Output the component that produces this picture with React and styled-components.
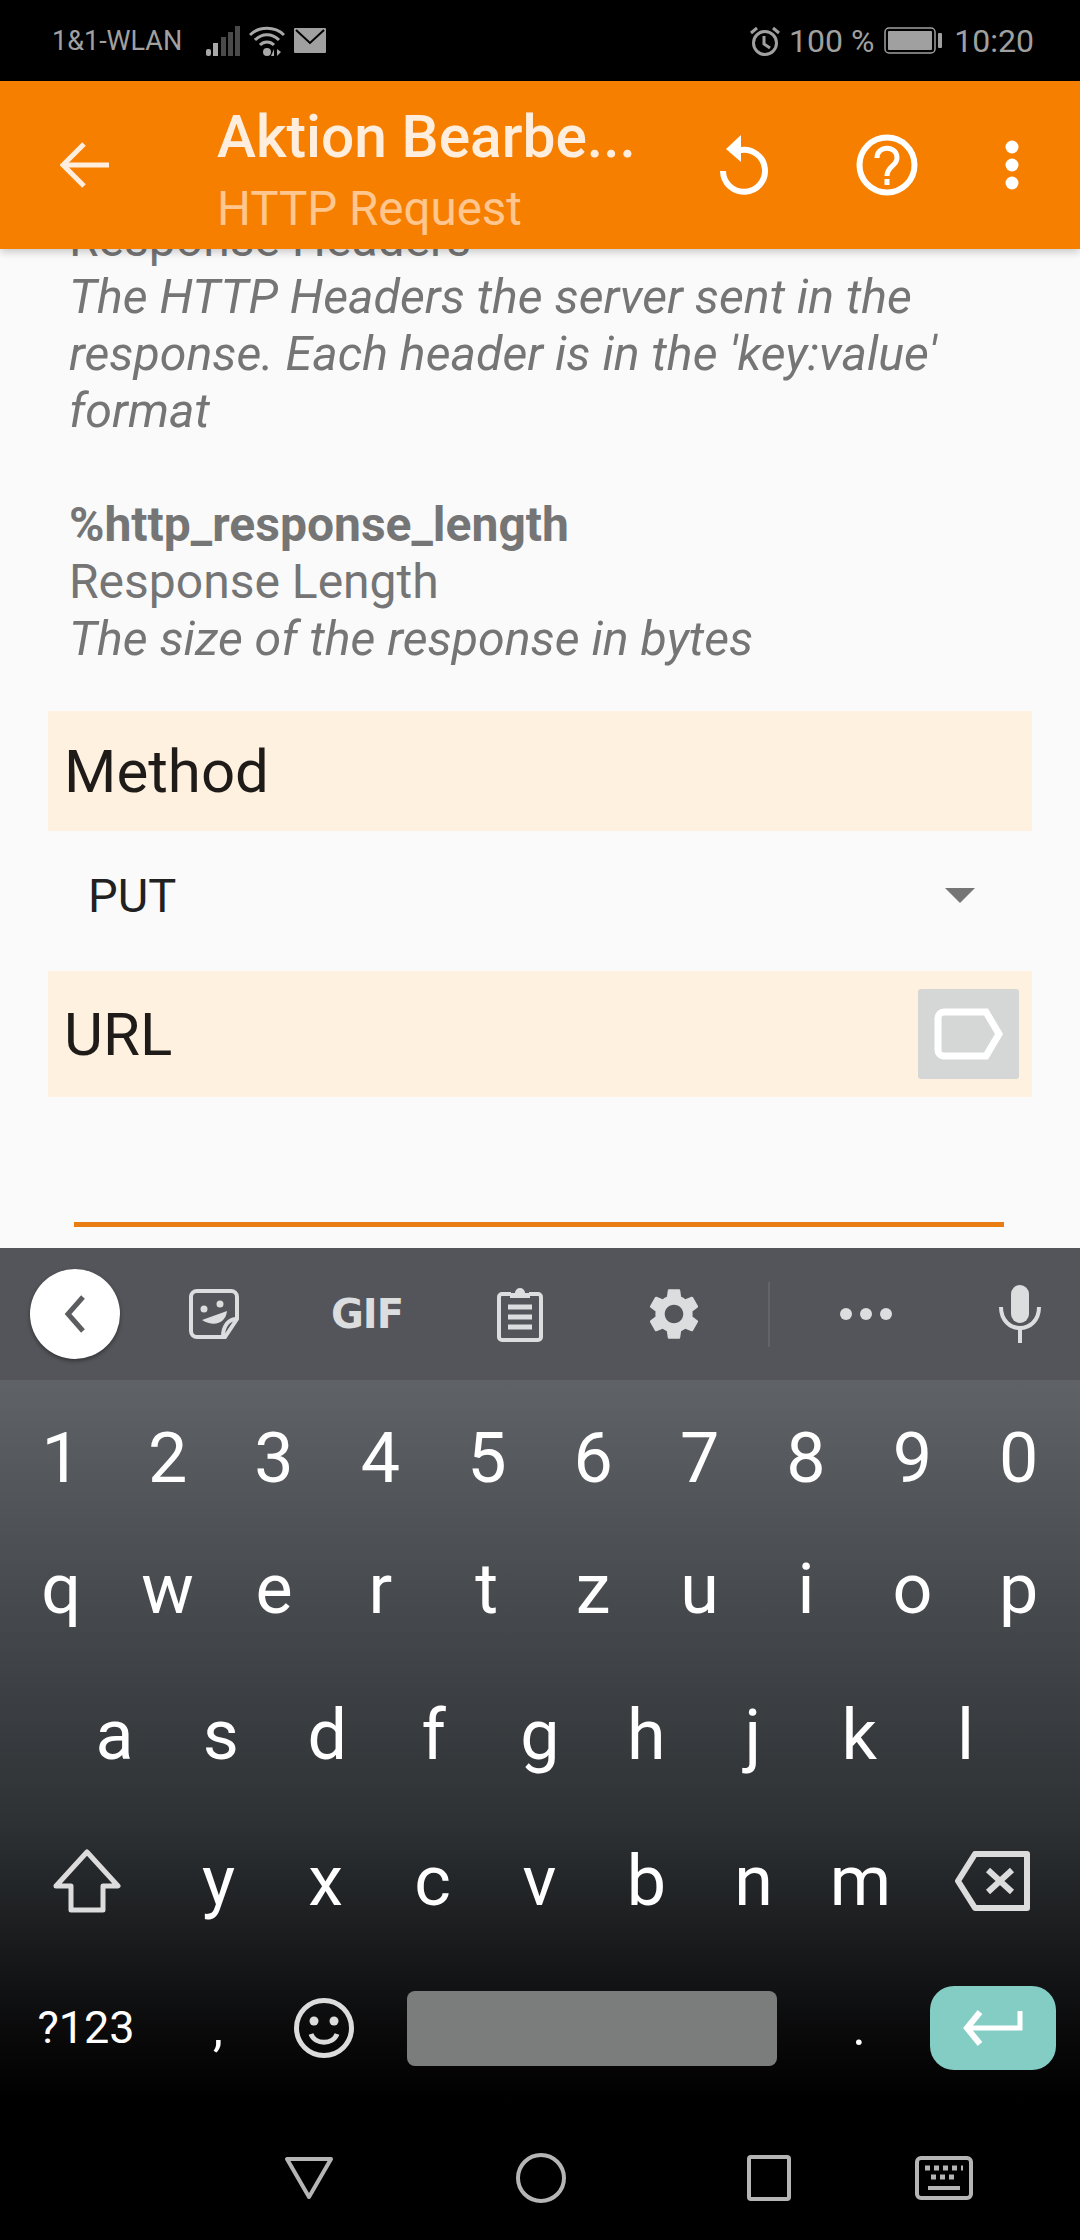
import React from 'react'
import styled, { createGlobalStyle } from 'styled-components'

const GlobalStyle = createGlobalStyle`
  html, body { margin: 0; padding: 0; background: #000; }
  * { box-sizing: border-box; }
`

const Screen = styled.div`
  width: 1080px;
  height: 2240px;
  display: flex;
  flex-direction: column;
  overflow: hidden;
  font-family: Roboto, "Liberation Sans", sans-serif;
  background: #000;
`

const StatusBar = styled.div`
  height: 81px;
  flex: none;
  background: #000;
  color: #a0a0a0;
  display: flex;
  align-items: center;
  justify-content: space-between;
  padding: 0 46px 0 52px;
`
const StatusGroup = styled.div`
  display: flex;
  align-items: center;
`
const Carrier = styled.span`
  font-size: 27px;
  margin-right: 24px;
`
const StatusText = styled.span`
  font-size: 32px;
  margin: 0 ${p => p.$right || 0}px 0 ${p => p.$left || 0}px;
`

const Toolbar = styled.div`
  height: 168px;
  flex: none;
  background: #f77f00;
  display: flex;
  align-items: center;
  position: relative;
  z-index: 2;
  box-shadow: 0 3px 8px rgba(0, 0, 0, 0.2);
  padding-left: 60px;
`
const Titles = styled.div`
  width: 449px;
  margin-left: 108px;
  padding-top: 8px;
  display: flex;
  flex-direction: column;
  white-space: nowrap;
`
const Title = styled.div`
  font-size: 58.7px;
  font-weight: 500;
  line-height: 72px;
  color: #ffeedd;
  margin-bottom: 8px;
`
const Subtitle = styled.div`
  font-size: 47.5px;
  line-height: 56px;
  color: #ffc78f;
`
const ToolIcon = styled.svg`
  flex: none;
  display: block;
  margin-left: ${p => p.$left}px;
`

const Content = styled.div`
  flex: 1;
  min-height: 0;
  background: #fafafa;
  overflow: hidden;
  display: flex;
  flex-direction: column;
  justify-content: flex-end;
`
const Docs = styled.div`
  padding: 0 20px 44px 69px;
  font-size: 48px;
  line-height: 57px;
  color: #757575;
  white-space: nowrap;
`
const DocGap = styled.div`
  height: 57px;
`
const DocLine = styled.div`
  font-style: ${p => (p.$italic ? 'italic' : 'normal')};
  font-size: ${p => (p.$italic ? '48.3px' : '48px')};
  font-weight: ${p => (p.$bold ? 700 : 400)};
`
const LabelBox = styled.div`
  height: ${p => p.$height}px;
  margin: 0 48px;
  flex: none;
  background: #fff1e0;
  color: #1f1b18;
  font-size: 60px;
  display: flex;
  align-items: center;
  justify-content: space-between;
  padding: 0 13px 0 16px;
`
const Spinner = styled.div`
  height: 140px;
  flex: none;
  display: flex;
  align-items: center;
  justify-content: space-between;
  padding: 0 105px 12px 88px;
  font-size: 47px;
  color: #212121;
`
const SpinnerArrow = styled.div`
  width: 0;
  height: 0;
  border-left: 15px solid transparent;
  border-right: 15px solid transparent;
  border-top: 15px solid #757575;
`
const TagButton = styled.div`
  width: 101px;
  height: 90px;
  border-radius: 3px;
  background: #d5d6d6;
  display: flex;
  align-items: center;
  justify-content: center;
`
const InputArea = styled.div`
  height: 151px;
  flex: none;
  padding: 125px 76px 0 74px;
`
const InputLine = styled.div`
  height: 5px;
  background: #e97c12;
`

const Keyboard = styled.div`
  height: 852px;
  flex: none;
  background: linear-gradient(180deg, #63666a 0%, #5f6266 15.5%, #2e3235 67%, #0a0a0b 92%, #000 100%);
  display: flex;
  flex-direction: column;
`
const SuggestRow = styled.div`
  height: 132px;
  flex: none;
  background: #54555a;
  display: flex;
  align-items: center;
  padding-left: 30px;
`
const BackCircle = styled.div`
  width: 90px;
  height: 90px;
  border-radius: 50%;
  background: #fff;
  box-shadow: 0 2px 4px rgba(0, 0, 0, 0.4);
  display: flex;
  align-items: center;
  justify-content: center;
`
const GifLabel = styled.span`
  width: 70px;
  margin-left: 92px;
  font-family: "DejaVu Sans", sans-serif;
  font-size: 40px;
  font-weight: 700;
  letter-spacing: -1px;
  color: #dcddde;
  text-align: center;
  white-space: nowrap;
`
const Divider = styled.div`
  width: 2px;
  height: 65px;
  margin-left: 63px;
  background: #63646a;
`
const KeyRows = styled.div`
  flex: 1;
  padding: 43px 8px 0;
  display: flex;
  flex-direction: column;
`
const KeyRow = styled.div`
  height: 70px;
  margin-bottom: ${p => p.$gap || 0}px;
  flex: none;
  display: flex;
  align-items: center;
  justify-content: center;
`
const Key = styled.div`
  width: ${p => p.$width || 106.4}px;
  flex: none;
  display: flex;
  align-items: center;
  justify-content: center;
  color: #fff;
  font-size: ${p => p.$size || 70}px;
  line-height: 70px;
  font-weight: 400;
`
const SpaceBar = styled.div`
  width: 370px;
  height: 75px;
  margin: 0 56px 0 31px;
  flex: none;
  border-radius: 8px;
  background: #7b7c7c;
`
const EnterKey = styled.div`
  width: 126px;
  height: 84px;
  border-radius: 24px;
  margin: 0 16px 0 45px;
  flex: none;
  background: #84cdc4;
  display: flex;
  align-items: center;
  justify-content: center;
`

const NavBar = styled.div`
  height: 140px;
  flex: none;
  background: #000;
  display: flex;
  align-items: center;
  padding: 16px 0 0 284px;
`

const digits = '1234567890'.split('')
const topRow = 'qwertzuiop'.split('')
const midRow = 'asdfghjkl'.split('')
const lowRow = 'yxcvbnm'.split('')

const App = () => (
  <Screen>
    <GlobalStyle />
    <StatusBar>
      <StatusGroup>
        <Carrier>1&amp;1-WLAN</Carrier>
        <svg width="34" height="30" viewBox="0 0 34 30">
          <rect x="0" y="23" width="5" height="7" rx="2" fill="#a8a8a8" />
          <rect x="7" y="17" width="5" height="13" fill="#a8a8a8" />
          <rect x="15" y="11" width="5" height="19" fill="#4a4a4a" />
          <rect x="22" y="6" width="5" height="24" fill="#4a4a4a" />
          <rect x="29" y="0" width="5" height="30" fill="#4a4a4a" />
        </svg>
        <ToolIcon $left={9} width="36" height="30" viewBox="0 0 36 30" fill="none" stroke="#a8a8a8" strokeWidth="3">
          <path d="M1 9C10 0 26 0 35 9" />
          <path d="M6 14C13 7 23 7 30 14" />
          <path d="M11 19C15 15 21 15 25 19" />
          <circle cx="18" cy="26" r="2.5" fill="#a8a8a8" />
          <path d="M25 30V23L22 30ZM28 23V30L32 26Z" fill="#a8a8a8" stroke="none" />
        </ToolIcon>
        <ToolIcon $left={9} width="32" height="25" viewBox="0 0 32 25">
          <rect width="32" height="25" rx="1" fill="#a0a0a0" />
          <path d="M2 2L16 15L30 2" fill="none" stroke="#000" strokeWidth="2" />
        </ToolIcon>
      </StatusGroup>
      <StatusGroup>
        <svg width="30" height="30" viewBox="0 0 30 30" fill="none" stroke="#a0a0a0" strokeWidth="3">
          <circle cx="15" cy="17" r="11.5" />
          <path d="M14 10V18L20 22" />
          <path d="M1 7L7 2M29 7L23 2" />
        </svg>
        <StatusText $left={9} $right={10}>100 %</StatusText>
        <svg width="58" height="27" viewBox="0 0 58 27">
          <rect x="1" y="1" width="50" height="25" rx="4" fill="none" stroke="#a0a0a0" strokeWidth="1.5" />
          <rect x="4" y="4" width="44" height="19" rx="1" fill="#a0a0a0" />
          <rect x="54" y="6" width="4" height="15" rx="1" fill="#a0a0a0" />
        </svg>
        <StatusText $left={12}>10:20</StatusText>
      </StatusGroup>
    </StatusBar>

    <Toolbar>
      <svg width="49" height="46" viewBox="0 0 49 46" fill="none" stroke="#ffeedd" strokeWidth="5">
        <path d="M24 2L3 23L24 44" />
        <path d="M3 23H49" />
      </svg>
      <Titles>
        <Title>Aktion Bearbe...</Title>
        <Subtitle>HTTP Request</Subtitle>
      </Titles>
      <ToolIcon $left={52} width="50" height="60" viewBox="0 0 50 60" fill="none">
        <path d="M5 36A21 21 0 1 0 23 15H20" stroke="#fff" strokeWidth="6" />
        <path d="M23 0V27L8 14Z" fill="#fff" />
      </ToolIcon>
      <ToolIcon $left={88} width="62" height="62" viewBox="0 0 62 62" fill="none">
        <circle cx="31" cy="31" r="27.5" stroke="#fff" strokeWidth="6" />
        <path d="M21 24C21 11 41 11 41 24C41 32 31 32 31 42" stroke="#fff" strokeWidth="5" />
        <rect x="28.5" y="45" width="5" height="6" fill="#fff" />
      </ToolIcon>
      <ToolIcon $left={87} width="14" height="50" viewBox="0 0 14 50" fill="#fff">
        <circle cx="7" cy="7" r="6.5" />
        <circle cx="7" cy="25" r="6.5" />
        <circle cx="7" cy="43" r="6.5" />
      </ToolIcon>
    </Toolbar>

    <Content>
      <Docs>
        <DocLine>Response Headers</DocLine>
        <DocLine $italic>The HTTP Headers the server sent in the</DocLine>
        <DocLine $italic>response. Each header is in the 'key:value'</DocLine>
        <DocLine $italic>format</DocLine>
        <DocGap />
        <DocLine $bold>%http_response_length</DocLine>
        <DocLine>Response Length</DocLine>
        <DocLine $italic>The size of the response in bytes</DocLine>
      </Docs>
      <LabelBox $height={120}>Method</LabelBox>
      <Spinner>
        PUT
        <SpinnerArrow />
      </Spinner>
      <LabelBox $height={126}>
        URL
        <TagButton>
          <svg width="70" height="52" viewBox="0 0 70 52" fill="none">
            <path d="M10 4H52L65 26L52 48H10A6 6 0 0 1 4 42V10A6 6 0 0 1 10 4Z" stroke="#fff" strokeWidth="7" />
          </svg>
        </TagButton>
      </LabelBox>
      <InputArea>
        <InputLine />
      </InputArea>
    </Content>

    <Keyboard>
      <SuggestRow>
        <BackCircle>
          <svg width="24" height="38" viewBox="0 0 24 38" fill="none">
            <path d="M20 2L5 19L20 36" stroke="#5c5d60" strokeWidth="5" />
          </svg>
        </BackCircle>
        <ToolIcon $left={69} width="50" height="50" viewBox="0 0 50 50" fill="none">
          <path d="M8 2H42A6 6 0 0 1 48 8V30L36 48H8A6 6 0 0 1 2 42V8A6 6 0 0 1 8 2Z" stroke="#dcddde" strokeWidth="4" />
          <path d="M48 30C40 30 34 36 34 48" stroke="#dcddde" strokeWidth="4" />
          <circle cx="15" cy="20" r="3.5" fill="#dcddde" />
          <circle cx="31" cy="15" r="3.5" fill="#dcddde" />
          <path d="M13 31L38 22C37 33 26 39 13 31Z" fill="#dcddde" />
        </ToolIcon>
        <GifLabel>GIF</GifLabel>
        <ToolIcon $left={96} width="46" height="56" viewBox="0 0 46 56" fill="none">
          <path d="M14 8H5A3 3 0 0 0 2 11V51A3 3 0 0 0 5 54H41A3 3 0 0 0 44 51V11A3 3 0 0 0 41 8H32" stroke="#dcddde" strokeWidth="4" />
          <path d="M13 12V7H18A5 5 0 0 1 28 7H33V12Z" fill="#dcddde" />
          <path d="M11 21H35M11 31H35M11 41H35" stroke="#dcddde" strokeWidth="5" />
        </ToolIcon>
        <ToolIcon $left={100} width="62" height="62" viewBox="0 0 24 24" fill="#dcddde">
          <path d="M19.14 12.94c.04-.3.06-.61.06-.94 0-.32-.02-.64-.07-.94l2.03-1.58c.18-.14.23-.41.12-.61l-1.92-3.32c-.12-.22-.37-.29-.59-.22l-2.39.96c-.5-.38-1.03-.7-1.62-.94l-.36-2.54c-.04-.24-.24-.41-.48-.41h-3.84c-.24 0-.43.17-.47.41l-.36 2.54c-.59.24-1.13.57-1.62.94l-2.39-.96c-.22-.08-.47 0-.59.22L2.74 8.87c-.12.21-.08.47.12.61l2.03 1.58c-.05.3-.09.63-.09.94s.02.64.07.94l-2.03 1.58c-.18.14-.23.41-.12.61l1.92 3.32c.12.22.37.29.59.22l2.39-.96c.5.38 1.03.7 1.62.94l.36 2.54c.05.24.24.41.48.41h3.84c.24 0 .44-.17.47-.41l.36-2.54c.59-.24 1.13-.56 1.62-.94l2.39.96c.22.08.47 0 .59-.22l1.92-3.32c.12-.22.07-.47-.12-.61l-2.01-1.58zM12 15.6c-1.98 0-3.6-1.62-3.6-3.6s1.62-3.6 3.6-3.6 3.6 1.62 3.6 3.6-1.62 3.6-3.6 3.6z" />
        </ToolIcon>
        <Divider />
        <ToolIcon $left={70} width="52" height="12" viewBox="0 0 52 12" fill="#dcddde">
          <circle cx="6" cy="6" r="6" />
          <circle cx="26" cy="6" r="6" />
          <circle cx="46" cy="6" r="6" />
        </ToolIcon>
        <ToolIcon $left={107} width="42" height="58" viewBox="0 0 42 58" fill="none">
          <rect x="12" y="0" width="18" height="38" rx="9" fill="#dcddde" />
          <path d="M2 22C2 50 40 50 40 22" stroke="#dcddde" strokeWidth="4" />
          <path d="M21 42V58" stroke="#dcddde" strokeWidth="4" />
        </ToolIcon>
      </SuggestRow>
      <KeyRows>
        <KeyRow $gap={61}>{digits.map(k => <Key key={k}>{k}</Key>)}</KeyRow>
        <KeyRow $gap={76}>{topRow.map(k => <Key key={k}>{k}</Key>)}</KeyRow>
        <KeyRow $gap={76}>{midRow.map(k => <Key key={k}>{k}</Key>)}</KeyRow>
        <KeyRow $gap={77}>
          <Key $width={157}>
            <svg width="68" height="64" viewBox="0 0 68 64" fill="none">
              <path d="M34 3L65 37H50V61H18V37H3Z" stroke="#dcdcdc" strokeWidth="5" strokeLinejoin="round" />
            </svg>
          </Key>
          {lowRow.map(k => <Key key={k} $width={107}>{k}</Key>)}
          <Key $width={158}>
            <svg width="76" height="60" viewBox="0 0 76 60" fill="none">
              <path d="M20 3H72V57H20L3 30Z" stroke="#dcdcdc" strokeWidth="6" strokeLinejoin="round" />
              <path d="M33 19L57 41M57 19L33 41" stroke="#dcdcdc" strokeWidth="6" />
            </svg>
          </Key>
        </KeyRow>
        <KeyRow>
          <Key $width={156} $size={45}>?123</Key>
          <Key $width={108} $size={50}>,</Key>
          <Key $width={104}>
            <svg width="60" height="60" viewBox="0 0 60 60" fill="none">
              <circle cx="30" cy="30" r="27.5" stroke="#dcdcdc" strokeWidth="5" />
              <circle cx="20" cy="23" r="4.5" fill="#dcdcdc" />
              <circle cx="40" cy="23" r="4.5" fill="#dcdcdc" />
              <path d="M17 36C21 47 39 47 43 36" stroke="#dcdcdc" strokeWidth="5" />
            </svg>
          </Key>
          <SpaceBar />
          <Key $width={52} $size={50}>.</Key>
          <EnterKey>
            <svg width="60" height="36" viewBox="0 0 60 36" fill="none">
              <path d="M57 1V18H5" stroke="#fff" strokeWidth="5" />
              <path d="M17 2L4 18L17 34" stroke="#fff" strokeWidth="6" />
            </svg>
          </EnterKey>
        </KeyRow>
      </KeyRows>
    </Keyboard>

    <NavBar>
      <svg width="50" height="44" viewBox="0 0 50 44" fill="none">
        <path d="M3 3H47L25 41Z" stroke="#b5b5b5" strokeWidth="4" strokeLinejoin="round" />
      </svg>
      <ToolIcon $left={182} width="50" height="50" viewBox="0 0 50 50" fill="none">
        <circle cx="25" cy="25" r="23" stroke="#b5b5b5" strokeWidth="4" />
      </ToolIcon>
      <ToolIcon $left={181} width="44" height="46" viewBox="0 0 44 46" fill="none">
        <rect x="2" y="2" width="40" height="42" rx="2" stroke="#b5b5b5" strokeWidth="4" />
      </ToolIcon>
      <ToolIcon $left={124} width="58" height="44" viewBox="0 0 58 44" fill="none">
        <rect x="2" y="2" width="54" height="40" rx="4" stroke="#b5b5b5" strokeWidth="4" />
        <path d="M10 12H48M16 21H42" stroke="#b5b5b5" strokeWidth="5" strokeDasharray="5 4" />
        <path d="M13 32H45" stroke="#b5b5b5" strokeWidth="4" />
      </ToolIcon>
    </NavBar>
  </Screen>
)

export default App
